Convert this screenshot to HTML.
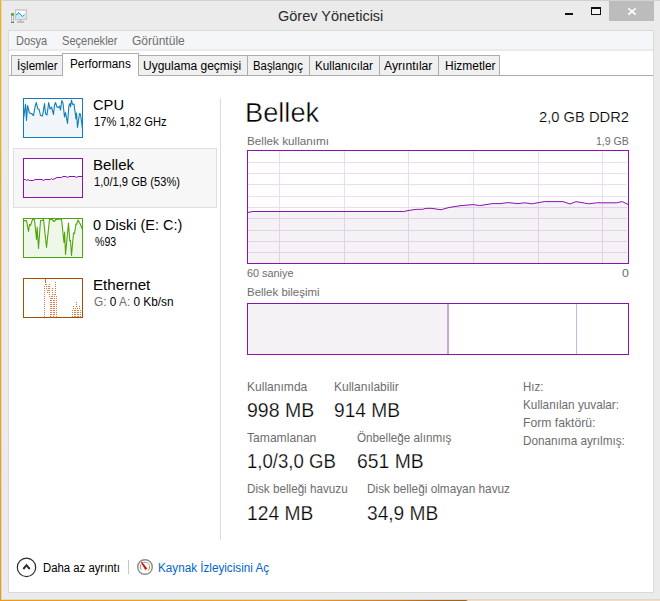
<!DOCTYPE html>
<html lang="tr"><head><meta charset="utf-8"><title>Görev Yöneticisi</title>
<style>
html,body{margin:0;padding:0}
body{width:660px;height:601px;overflow:hidden;position:relative;background:#ebebeb;font-family:"Liberation Sans",sans-serif}
.abs,.thumb{position:absolute;display:block}
.t{position:absolute;white-space:nowrap;line-height:normal;transform-origin:0 0}
.wall-l{position:absolute;left:0;top:0;width:1px;height:601px;background:linear-gradient(180deg,#fdb200,#f7a600 300px,#f19a00)}
.wall-b{position:absolute;left:0;top:600px;width:660px;height:1px;background:linear-gradient(90deg,#f29b05 0,#f5a11f 300px,#e38c1f 340px,#cc7a1e 400px,#a8661e 440px,#a0601e 466px,#f6dcbc 468px,#f6dcbc 660px)}
.b-top{position:absolute;left:1px;top:0;width:659px;height:1px;background:#d2d2d2}
.b-left{position:absolute;left:1px;top:0;width:1px;height:600px;background:#d6d9e0}
.b-bot{position:absolute;left:1px;top:599px;width:659px;height:1px;background:#d6d9de}
.client{position:absolute;left:8px;top:30px;width:644px;height:561px;border:1px solid #dadada;background:#fff}
.menubar{position:absolute;left:9px;top:31px;width:644px;height:18px;background:#f5f6f7;border-bottom:2px solid #ebebec}
.close{position:absolute;left:609px;top:1px;width:45px;height:20px;background:#bcbcbc}
.tabline{position:absolute;left:9px;top:75px;width:644px;height:1px;background:#acacac}
.tab{position:absolute;top:55px;height:19px;background:#f0f0f0;border:1px solid #acacac;border-bottom:none}
.tabsel{position:absolute;left:62px;top:53px;width:75px;height:22px;background:#fff;border:1px solid #acacac;border-bottom:none}
.sel{position:absolute;left:13px;top:148px;width:202px;height:58px;background:#f7f7f7;border:1px solid #dfdfdf}
.vdiv{position:absolute;left:220px;top:98px;width:1px;height:442px;background:#dcdcdc}
.comp{position:absolute;left:247px;top:303px;width:380px;height:50px;border:1px solid #8b12ae;background:#fff}
.c1{position:absolute;left:0;top:0;width:199px;height:50px;background:#f4f2f4}
.d1{position:absolute;left:199px;top:0;width:2px;height:50px;background:#c9a6d8}
.d2{position:absolute;left:328px;top:0;width:1px;height:50px;background:#d2b4de}
.sep{position:absolute;left:128px;top:560px;width:1px;height:14px;background:#c6c6c6}
</style></head><body>
<div class="wall-l"></div><div class="b-top"></div><div class="b-left"></div><div class="b-bot"></div><div class="wall-b"></div>
<div class="close"></div>
<svg class="abs" style="left:560px;top:0" width="100" height="24" viewBox="560 0 100 24">
<rect x="565" y="13" width="8" height="2" fill="#111"/>
<rect x="591.5" y="7.5" width="9" height="7" fill="#f3f3f3" stroke="#111" stroke-width="1"/><rect x="591" y="7" width="10" height="2" fill="#111"/>
<path d="M628.3 8.3 L635.7 14.7 M635.7 8.3 L628.3 14.7" stroke="#fff" stroke-width="1.7" fill="none"/>
</svg>
<svg class="abs" style="left:10px;top:8px" width="20" height="18" viewBox="10 8 20 18">
<rect x="11.4" y="14" width="2.3" height="8.4" fill="#e9e9e9" stroke="#a4a4a4" stroke-width=".7"/>
<rect x="11.2" y="13.5" width="2.7" height="1" fill="#3c3446"/>
<rect x="11.3" y="14.5" width="2.5" height="1.4" fill="#22e000"/>
<rect x="11.1" y="21.9" width="2.9" height="1.1" fill="#6a6a6a"/>
<rect x="15.3" y="9.8" width="11.4" height="9.6" fill="#dcdcdc" stroke="#b9b9b9" stroke-width=".7"/>
<rect x="16" y="11" width="9.3" height="7.2" fill="#fff"/>
<polygon points="16,14.6 17.5,14.4 18.6,12.4 22.5,16.6 24.7,14.4 25.3,14.2 25.3,18.2 16,18.2" fill="#c5ecfb"/>
<polyline points="16,14.6 17.5,14.4 18.6,12.4 22.5,16.6 24.7,14.4" fill="none" stroke="#1c7fc8" stroke-width="0.9" stroke-linejoin="round"/>
<polygon points="19.7,19.7 21.7,19.7 22.6,21.4 18.8,21.4" fill="#c4c4c4"/>
<rect x="17" y="21.4" width="7.2" height="1.3" fill="#adadad"/>
</svg>
<div class="client"></div>
<div class="menubar"></div>
<div class="tabline"></div>
<div class="tab" style="left:11px;width:50px"></div><div class="tab" style="left:138px;width:108px"></div><div class="tab" style="left:247px;width:61px"></div><div class="tab" style="left:309px;width:69px"></div><div class="tab" style="left:379px;width:58px"></div><div class="tab" style="left:438px;width:60px"></div>
<div class="tabsel"></div>
<div class="sel"></div>
<div class="vdiv"></div>
<svg class="thumb" style="left:23px;top:98px" width="60" height="40" viewBox="23 98 60 40"><rect x="23" y="98" width="60" height="40" fill="#fff"/><polygon points="23.5,119.0 24.5,112.0 25.5,104.0 26.5,120.5 27.5,105.5 29.5,113.0 31.5,113.5 33.5,115.5 35.0,107.0 36.3,102.5 37.8,109.0 39.0,109.0 40.5,115.5 42.5,116.0 44.5,103.5 45.5,113.5 47.0,115.0 48.7,102.5 50.0,109.0 51.5,107.0 53.5,114.5 54.5,105.0 55.5,102.5 57.0,107.0 58.5,107.5 59.5,106.0 60.5,110.0 61.8,100.5 63.0,103.0 64.5,117.0 65.5,112.5 67.5,123.5 69.0,105.0 70.0,103.5 70.5,107.0 71.5,100.0 72.5,104.5 74.0,104.0 76.0,119.0 76.5,113.0 77.5,127.5 79.5,113.5 80.5,114.5 82.5,129.0 83,138 23,138" fill="#f1f6fa"/><polyline points="23.5,119.0 24.5,112.0 25.5,104.0 26.5,120.5 27.5,105.5 29.5,113.0 31.5,113.5 33.5,115.5 35.0,107.0 36.3,102.5 37.8,109.0 39.0,109.0 40.5,115.5 42.5,116.0 44.5,103.5 45.5,113.5 47.0,115.0 48.7,102.5 50.0,109.0 51.5,107.0 53.5,114.5 54.5,105.0 55.5,102.5 57.0,107.0 58.5,107.5 59.5,106.0 60.5,110.0 61.8,100.5 63.0,103.0 64.5,117.0 65.5,112.5 67.5,123.5 69.0,105.0 70.0,103.5 70.5,107.0 71.5,100.0 72.5,104.5 74.0,104.0 76.0,119.0 76.5,113.0 77.5,127.5 79.5,113.5 80.5,114.5 82.5,129.0" fill="none" stroke="#117dbb" stroke-width="1.1" stroke-linejoin="round"/><rect x="23.5" y="98.5" width="59" height="39" fill="none" stroke="#117dbb" stroke-width="1"/></svg>
<svg class="thumb" style="left:23px;top:158px" width="60" height="40" viewBox="23 158 60 40"><rect x="23" y="158" width="60" height="40" fill="#fff"/><polygon points="23.5,179.5 25.5,179.5 26.5,180.5 28.0,179.5 29.5,180.5 33.5,180.5 35.0,179.5 42.0,179.5 43.5,180.5 45.0,179.5 50.5,179.5 51.5,178.5 52.5,179.5 54.0,179.0 57.0,177.5 61.5,177.5 63.0,176.5 66.0,176.5 67.5,177.5 69.0,176.5 75.0,176.5 76.5,177.5 78.0,176.5 82.5,176.5 83,198 23,198" fill="#f4f2f4"/><polyline points="23.5,179.5 25.5,179.5 26.5,180.5 28.0,179.5 29.5,180.5 33.5,180.5 35.0,179.5 42.0,179.5 43.5,180.5 45.0,179.5 50.5,179.5 51.5,178.5 52.5,179.5 54.0,179.0 57.0,177.5 61.5,177.5 63.0,176.5 66.0,176.5 67.5,177.5 69.0,176.5 75.0,176.5 76.5,177.5 78.0,176.5 82.5,176.5" fill="none" stroke="#8b12ae" stroke-width="1"/><rect x="23.5" y="158.5" width="59" height="39" fill="none" stroke="#8b12ae" stroke-width="1"/></svg>
<svg class="thumb" style="left:23px;top:218px" width="60" height="40" viewBox="23 218 60 40"><rect x="23" y="218" width="60" height="40" fill="#fff"/><polygon points="23.5,220.0 25.5,221.0 26.5,220.5 28.5,231.5 29.5,224.5 30.5,225.5 32.5,219.5 34.5,219.5 36.5,239.5 37.2,227.0 38.5,248.5 40.5,220.5 42.5,220.5 43.5,219.0 46.5,247.5 49.5,219.5 52.0,219.5 54.0,221.5 56.0,219.5 61.5,219.0 64.0,242.5 64.7,232.0 65.5,254.5 68.5,223.0 69.8,241.0 70.5,240.5 71.5,255.5 73.5,233.0 74.5,233.5 76.0,224.0 76.5,224.5 78.0,220.0 80.0,223.5 82.5,229.5 83,258 23,258" fill="#eff7e9"/><polyline points="23.5,220.0 25.5,221.0 26.5,220.5 28.5,231.5 29.5,224.5 30.5,225.5 32.5,219.5 34.5,219.5 36.5,239.5 37.2,227.0 38.5,248.5 40.5,220.5 42.5,220.5 43.5,219.0 46.5,247.5 49.5,219.5 52.0,219.5 54.0,221.5 56.0,219.5 61.5,219.0 64.0,242.5 64.7,232.0 65.5,254.5 68.5,223.0 69.8,241.0 70.5,240.5 71.5,255.5 73.5,233.0 74.5,233.5 76.0,224.0 76.5,224.5 78.0,220.0 80.0,223.5 82.5,229.5" fill="none" stroke="#4da60c" stroke-width="1.1" stroke-linejoin="round"/><rect x="23.5" y="218.5" width="59" height="39" fill="none" stroke="#4da60c" stroke-width="1"/></svg>
<svg class="thumb" style="left:23px;top:278px" width="60" height="40" viewBox="23 278 60 40"><rect x="23" y="278" width="60" height="40" fill="#fff"/><polyline points="44,317.5 45.2,279 47.7,293 49.4,284 50.9,317.5 52.4,287 53.9,317.5 55.5,281.5 57,317.5" fill="none" stroke="#dc6e36" stroke-width="0.9" shape-rendering="crispEdges"/><polyline points="72,317.5 73.5,306 75,317.5 76.5,300.5 78,317.5 79.5,306 81,317.5" fill="none" stroke="#dc6e36" stroke-width="0.9" shape-rendering="crispEdges"/><rect x="24" y="283" width="58" height="1" fill="#fff"/><rect x="24" y="285" width="58" height="1" fill="#fff"/><rect x="24" y="287" width="58" height="1" fill="#fff"/><rect x="24" y="289" width="58" height="1" fill="#fff"/><rect x="24" y="291" width="58" height="1" fill="#fff"/><rect x="24" y="293" width="58" height="1" fill="#fff"/><rect x="24" y="295" width="58" height="1" fill="#fff"/><rect x="24" y="297" width="58" height="1" fill="#fff"/><rect x="24" y="299" width="58" height="1" fill="#fff"/><rect x="24" y="301" width="58" height="1" fill="#fff"/><rect x="24" y="303" width="58" height="1" fill="#fff"/><rect x="24" y="305" width="58" height="1" fill="#fff"/><rect x="24" y="307" width="58" height="1" fill="#fff"/><rect x="24" y="309" width="58" height="1" fill="#fff"/><rect x="24" y="311" width="58" height="1" fill="#fff"/><rect x="24" y="313" width="58" height="1" fill="#fff"/><rect x="24" y="315" width="58" height="1" fill="#fff"/><rect x="23.5" y="278.5" width="59" height="39" fill="none" stroke="#a74f01" stroke-width="1"/></svg>
<svg class="abs" style="left:247px;top:150px" width="382" height="114" viewBox="0 0 382 114">
<rect x="0" y="0" width="382" height="114" fill="#fff"/>
<polygon points="0.5,62.6 3.0,62.0 6.0,61.5 156.8,61.5 161.0,60.6 167.0,59.6 170.0,59.3 175.5,59.3 179.0,58.4 184.0,58.3 194.0,59.7 202.0,57.5 214.0,55.6 226.7,54.6 232.6,55.6 245.4,53.6 253.0,53.6 261.0,52.6 271.0,53.6 277.8,52.8 284.7,53.8 297.4,51.6 316.0,51.6 323.0,54.0 329.0,51.6 341.7,53.8 349.6,52.8 369.3,52.8 375.2,51.6 381.0,54.4 382,114 0,114" fill="#f4f2f4"/>
<g opacity=".14"><rect x="1" y="12" width="379" height="1" fill="#8b12ae"/><rect x="1" y="23" width="379" height="1" fill="#8b12ae"/><rect x="1" y="34" width="379" height="1" fill="#8b12ae"/><rect x="1" y="46" width="379" height="1" fill="#8b12ae"/><rect x="1" y="57" width="379" height="1" fill="#8b12ae"/><rect x="1" y="68" width="379" height="1" fill="#8b12ae"/><rect x="1" y="80" width="379" height="1" fill="#8b12ae"/><rect x="1" y="91" width="379" height="1" fill="#8b12ae"/><rect x="1" y="102" width="379" height="1" fill="#8b12ae"/><rect x="32" y="1" width="1" height="112" fill="#8b12ae"/><rect x="97" y="1" width="1" height="112" fill="#8b12ae"/><rect x="161" y="1" width="1" height="112" fill="#8b12ae"/><rect x="226" y="1" width="1" height="112" fill="#8b12ae"/><rect x="291" y="1" width="1" height="112" fill="#8b12ae"/><rect x="355" y="1" width="1" height="112" fill="#8b12ae"/></g>
<polyline points="0.5,62.6 3.0,62.0 6.0,61.5 156.8,61.5 161.0,60.6 167.0,59.6 170.0,59.3 175.5,59.3 179.0,58.4 184.0,58.3 194.0,59.7 202.0,57.5 214.0,55.6 226.7,54.6 232.6,55.6 245.4,53.6 253.0,53.6 261.0,52.6 271.0,53.6 277.8,52.8 284.7,53.8 297.4,51.6 316.0,51.6 323.0,54.0 329.0,51.6 341.7,53.8 349.6,52.8 369.3,52.8 375.2,51.6 381.0,54.4" fill="none" stroke="#8b12ae" stroke-width="1"/>
<rect x=".5" y=".5" width="381" height="113" fill="none" stroke="#8b12ae" stroke-width="1"/>
</svg>
<div class="comp">
<div class="c1"></div><div class="d1"></div><div class="d2"></div>
</div>
<svg class="abs" style="left:14px;top:555px" width="26" height="26" viewBox="14 555 26 26">
<circle cx="26.5" cy="567.4" r="9.2" fill="#fff" stroke="#2b2b2b" stroke-width="1.2"/>
<polyline points="23.3,569 26.5,565.2 29.7,569" fill="none" stroke="#2b2b2b" stroke-width="2"/>
</svg>
<div class="sep"></div>
<svg class="abs" style="left:135px;top:557px" width="20" height="20" viewBox="135 557 20 20">
<circle cx="145" cy="567" r="7.3" fill="#fdfdfd" stroke="#8c8c8c" stroke-width="1.4"/>
<path d="M141.15 569.70 A4.7 4.7 0 0 1 140.93 564.65" fill="none" stroke="#7fa070" stroke-width="1"/><path d="M140.93 564.65 A4.7 4.7 0 0 1 149.07 564.65" fill="none" stroke="#9aa39a" stroke-width="1"/><path d="M149.07 564.65 A4.7 4.7 0 0 1 149.63 566.18" fill="none" stroke="#c9a070" stroke-width="1"/><path d="M149.63 566.18 A4.7 4.7 0 0 1 148.02 570.60" fill="none" stroke="#ea7a1e" stroke-width="1"/>
<polygon points="141.0,562.4 141.9,561.7 147.3,568.5 145.2,570.0" fill="#d4100c"/>
</svg>
<div class="t" id="title" style="left:277.66px;top:7px;font-size:15.0px;color:#2a2a2a;transform:scaleX(0.9670)">Görev Yöneticisi</div>
<div class="t" id="m1" style="left:15.79px;top:34px;font-size:12.3px;color:#6d6d6d;transform:scaleX(0.8949)">Dosya</div>
<div class="t" id="m2" style="left:61.95px;top:34px;font-size:12.3px;color:#6d6d6d;transform:scaleX(0.9019)">Seçenekler</div>
<div class="t" id="m3" style="left:131.75px;top:34px;font-size:12.3px;color:#6d6d6d;transform:scaleX(0.9765)">Görüntüle</div>
<div class="t" id="t1" style="left:16.62px;top:59px;font-size:12.3px;color:#000000;transform:scaleX(0.9455)">İşlemler</div>
<div class="t" id="t2" style="left:69.93px;top:57px;font-size:12.3px;color:#000000;transform:scaleX(0.9559)">Performans</div>
<div class="t" id="t3" style="left:142.65px;top:59px;font-size:12.3px;color:#000000;transform:scaleX(0.9773)">Uygulama geçmişi</div>
<div class="t" id="t4" style="left:252.96px;top:59px;font-size:12.3px;color:#000000;transform:scaleX(0.9232)">Başlangıç</div>
<div class="t" id="t5" style="left:314.84px;top:59px;font-size:12.3px;color:#000000;transform:scaleX(0.9536)">Kullanıcılar</div>
<div class="t" id="t6" style="left:384.47px;top:59px;font-size:12.3px;color:#000000;transform:scaleX(0.9879)">Ayrıntılar</div>
<div class="t" id="t7" style="left:445.12px;top:59px;font-size:12.3px;color:#000000;transform:scaleX(0.9730)">Hizmetler</div>
<div class="t" id="s1a" style="left:92.55px;top:96px;font-size:15.0px;color:#000000;transform:scaleX(0.9787)">CPU</div>
<div class="t" id="s1b" style="left:94.03px;top:115px;font-size:12.3px;color:#000000;transform:scaleX(0.9079)">17% 1,82 GHz</div>
<div class="t" id="s2a" style="left:92.93px;top:156px;font-size:15.0px;color:#000000;transform:scaleX(1.0047)">Bellek</div>
<div class="t" id="s2b" style="left:94.03px;top:175px;font-size:12.3px;color:#000000;transform:scaleX(0.9056)">1,0/1,9 GB (53%)</div>
<div class="t" id="s3a" style="left:92.69px;top:216px;font-size:15.0px;color:#000000;transform:scaleX(0.9652)">0 Diski (E: C:)</div>
<div class="t" id="s3b" style="left:94.54px;top:235px;font-size:12.3px;color:#000000;transform:scaleX(0.8630)">%93</div>
<div class="t" id="s4a" style="left:92.93px;top:276px;font-size:15.0px;color:#000000;transform:scaleX(1.0106)">Ethernet</div>
<div class="t" id="s4b" style="left:94.36px;top:295px;font-size:12.3px;color:#000000;transform:scaleX(0.9617)"><span style="color:#6d6d6d">G:</span> 0 <span style="color:#6d6d6d">A:</span> 0 Kb/sn</div>
<div class="t" id="h" style="left:244.82px;top:98px;font-size:27px;color:#000000;transform:scaleX(1.0090);-webkit-text-stroke:0.4px #fff">Bellek</div>
<div class="t" id="hr" style="left:538.96px;top:108px;font-size:15.3px;color:#000000;transform:scaleX(0.9629);-webkit-text-stroke:0.2px #fff">2,0 GB DDR2</div>
<div class="t" id="l1" style="left:246.70px;top:135px;font-size:10.8px;color:#6d6d6d;transform:scaleX(1.0856)">Bellek kullanımı</div>
<div class="t" id="l1r" style="left:595.87px;top:135px;font-size:10.8px;color:#6d6d6d;transform:scaleX(0.9765)">1,9 GB</div>
<div class="t" id="l2" style="left:246.69px;top:267px;font-size:10.8px;color:#6d6d6d;transform:scaleX(1.0055)">60 saniye</div>
<div class="t" id="l2r" style="left:621.90px;top:267px;font-size:10.8px;color:#6d6d6d;transform:scaleX(1.1501)">0</div>
<div class="t" id="l3" style="left:246.72px;top:286px;font-size:10.8px;color:#6d6d6d;transform:scaleX(1.0609)">Bellek bileşimi</div>
<div class="t" id="a1" style="left:246.70px;top:380px;font-size:12.2px;color:#6d6d6d;transform:scaleX(0.9888)">Kullanımda</div>
<div class="t" id="a2" style="left:333.71px;top:380px;font-size:12.2px;color:#6d6d6d;transform:scaleX(0.9853)">Kullanılabilir</div>
<div class="t" id="v1" style="left:246.75px;top:399px;font-size:19.5px;color:#000000;transform:scaleX(0.9989);-webkit-text-stroke:0.25px #fff">998 MB</div>
<div class="t" id="v2" style="left:333.76px;top:399px;font-size:19.5px;color:#000000;transform:scaleX(0.9821);-webkit-text-stroke:0.25px #fff">914 MB</div>
<div class="t" id="a3" style="left:247.36px;top:431px;font-size:12.2px;color:#6d6d6d;transform:scaleX(0.9940)">Tamamlanan</div>
<div class="t" id="a4" style="left:356.79px;top:431px;font-size:12.2px;color:#6d6d6d;transform:scaleX(0.9593)">Önbelleğe alınmış</div>
<div class="t" id="v3" style="left:247.27px;top:450px;font-size:19.5px;color:#000000;transform:scaleX(0.9525);-webkit-text-stroke:0.25px #fff">1,0/3,0 GB</div>
<div class="t" id="v4" style="left:356.50px;top:450px;font-size:19.5px;color:#000000;transform:scaleX(0.9921);-webkit-text-stroke:0.25px #fff">651 MB</div>
<div class="t" id="a5" style="left:246.73px;top:482px;font-size:12.2px;color:#6d6d6d;transform:scaleX(0.9583)">Disk belleği havuzu</div>
<div class="t" id="a6" style="left:367.22px;top:482px;font-size:12.2px;color:#6d6d6d;transform:scaleX(0.9685)">Disk belleği olmayan havuz</div>
<div class="t" id="v5" style="left:247.02px;top:502px;font-size:19.5px;color:#000000;transform:scaleX(0.9859);-webkit-text-stroke:0.25px #fff">124 MB</div>
<div class="t" id="v6" style="left:367.26px;top:502px;font-size:19.5px;color:#000000;transform:scaleX(0.9821);-webkit-text-stroke:0.25px #fff">34,9 MB</div>
<div class="t" id="r1" style="left:522.65px;top:380px;font-size:12.2px;color:#6d6d6d;transform:scaleX(0.9403)">Hız:</div>
<div class="t" id="r2" style="left:522.63px;top:398px;font-size:12.2px;color:#6d6d6d;transform:scaleX(0.9644)">Kullanılan yuvalar:</div>
<div class="t" id="r3" style="left:522.59px;top:416px;font-size:12.2px;color:#6d6d6d;transform:scaleX(0.9992)">Form faktörü:</div>
<div class="t" id="r4" style="left:522.63px;top:434px;font-size:12.2px;color:#6d6d6d;transform:scaleX(0.9636)">Donanıma ayrılmış:</div>
<div class="t" id="b1" style="left:42.76px;top:561px;font-size:12.3px;color:#000000;transform:scaleX(0.9221)">Daha az ayrıntı</div>
<div class="t" id="b2" style="left:157.74px;top:561px;font-size:12.3px;color:#0066cc;transform:scaleX(0.9503)">Kaynak İzleyicisini Aç</div>
</body></html>
